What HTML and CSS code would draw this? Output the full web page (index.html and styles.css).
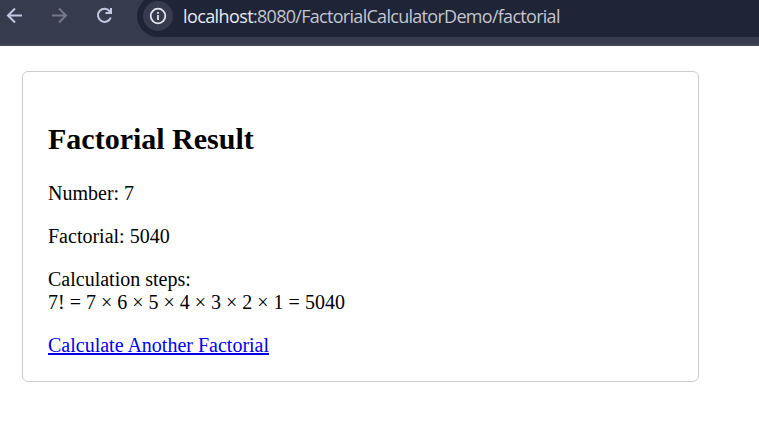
FILE: index.html
```html
<!DOCTYPE html>
<html lang="en">
<head>
<meta charset="utf-8">
<title>Factorial Result</title>
<link rel="stylesheet" href="styles.css">
</head>
<body>
<header class="toolbar">
  <svg class="nav" viewBox="0 0 137 32" fill="none" stroke="#c2c8e2" stroke-width="2">
    <path d="M22 15.5H8.5M15 8.5l-7 7 7 7"/>
    <path stroke="#747989" d="M52 15.5h13.500M59 8.500l7 7-7 7"/>
    <path d="M110 11.500A6.600 6.600 0 1 0 110.800 17.500M111 8v5h-5.500"/>
    <path fill="#c2c8e2" stroke="none" d="M112 8v6h-6z"/>
  </svg>
  <div class="address">
    <span class="info">
      <svg viewBox="0 0 18 18" width="18" height="18"><circle cx="9" cy="9" r="7.300" fill="none" stroke="#e3e5ee" stroke-width="1.800"/><path fill="#e3e5ee" d="M8.100 8h1.800v5H8.100zM8.100 5h1.800v1.800H8.100z"/></svg>
    </span>
    <span class="url"><span class="host">localhost</span>:8080/FactorialCalculatorDemo/factorial</span>
  </div>
</header>
<main class="card">
  <h2>Factorial Result</h2>
  <p>Number: 7</p>
  <p>Factorial: 5040</p>
  <p>Calculation steps:<br>7! = 7 × 6 × 5 × 4 × 3 × 2 × 1 = 5040</p>
  <a href="#">Calculate Another Factorial</a>
</main>
</body>
</html>
```
FILE: styles.css
```css
body {
  margin: 0;
  background: #fff;
  color: #000;
  font: 20px/23px "Liberation Serif", "Times New Roman", serif;
}
.toolbar {
  box-sizing: border-box;
  display: flex;
  align-items: flex-start;
  height: 46px;
  background: #363b4d;
  border-bottom: 2px solid #41454f;
  overflow: hidden;
}
.nav {
  flex: none;
  width: 137px;
  height: 32px;
}
.address {
  flex: 1;
  display: flex;
  align-items: center;
  height: 42px;
  margin-top: -5px;
  padding-left: 6px;
  box-sizing: border-box;
  border-radius: 21px 0 0 21px;
  background: #1f2437;
}
.info {
  display: flex;
  align-items: center;
  justify-content: center;
  width: 30px;
  height: 30px;
  border-radius: 50%;
  background: #363b4d;
}
.url {
  margin-left: 10px;
  color: #c3c6cf;
  font: 18px/24px "Open Sans", "Noto Sans", sans-serif;
  letter-spacing: -0.71px;
  white-space: nowrap;
}
.host {
  color: #e8eaf2;
  letter-spacing: -0.6px;
}
.card {
  box-sizing: border-box;
  width: 677px;
  margin: 25px 0 0 22px;
  padding: 25px 25px 24px;
  border: 1px solid #ccc;
  border-radius: 6px;
}
h2 {
  margin: 25px 0 26px;
  font-size: 30px;
  line-height: 34px;
}
p {
  margin: 0 0 20px;
}
a {
  display: block;
  color: #00e;
  text-decoration: underline;
  text-underline-offset: 1px;
}
```
